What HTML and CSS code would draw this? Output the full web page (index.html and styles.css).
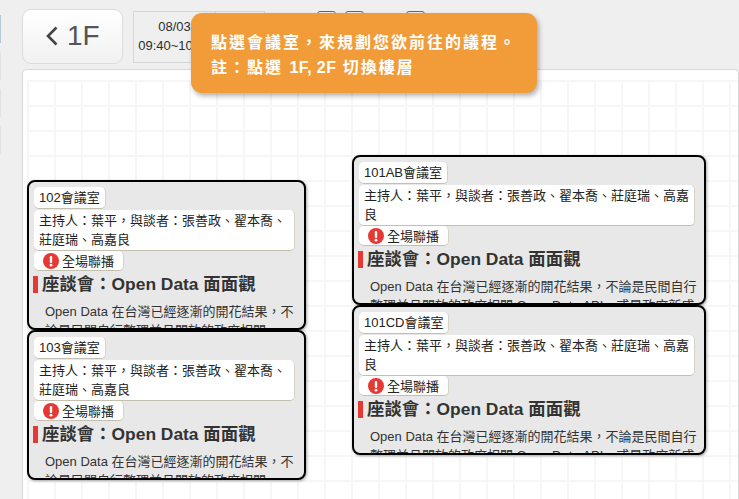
FILE: index.html
```
<!DOCTYPE html>
<html lang="zh-Hant">
<head>
<meta charset="utf-8">
<title>議程地圖</title>
<link rel="stylesheet" href="styles.css">
</head>
<body>
<div class="rail">
  <span class="rail-item rail-active"></span>
  <span class="rail-item"></span>
  <span class="rail-item"></span>
  <span class="rail-item"></span>
</div>
<main class="page">
  <header class="toolbar">
    <button class="floor-btn">
      <svg class="chevron" width="12" height="20" viewBox="0 0 12 20"><path d="M10.5 1.5 2 10l8.500 8.500" fill="none" stroke="#444" stroke-width="2.600"/></svg>
      <span>1F</span>
    </button>
    <div class="session">
      <div class="session-time">08/03<br>09:40~10:30</div>
      <div class="session-extra"></div>
    </div>
    <div class="tools">
      <span class="tool"></span>
      <span class="tool"></span>
      <span class="tool tool-far"></span>
    </div>
  </header>
  <section class="map">
    <div class="grid"></div>

    <article class="room room-narrow room-102">
      <div class="tag">102會議室</div>
      <div class="host">主持人&#xFF1A;葉平&#xFF0C;與談者&#xFF1A;張善政、翟本喬、莊庭瑞、高嘉良</div>
      <div class="live"><svg width="16" height="16" viewBox="0 0 16 16"><circle cx="8" cy="8" r="8" fill="#e53935"/><rect x="6.800" y="3" width="2.400" height="7" rx="1" fill="#fff"/><circle cx="8" cy="12.200" r="1.400" fill="#fff"/></svg>全場聯播</div>
      <h2 class="title">座談會&#xFF1A;Open Data 面面觀</h2>
      <p class="desc">Open Data 在台灣已經逐漸的開花結果&#xFF0C;不論是民間自行整理並且開放的政府相關 Open Data API&#xFF0C;或是政府新成立的資料開放平台</p>
    </article>

    <article class="room room-narrow room-103">
      <div class="tag">103會議室</div>
      <div class="host">主持人&#xFF1A;葉平&#xFF0C;與談者&#xFF1A;張善政、翟本喬、莊庭瑞、高嘉良</div>
      <div class="live"><svg width="16" height="16" viewBox="0 0 16 16"><circle cx="8" cy="8" r="8" fill="#e53935"/><rect x="6.800" y="3" width="2.400" height="7" rx="1" fill="#fff"/><circle cx="8" cy="12.200" r="1.400" fill="#fff"/></svg>全場聯播</div>
      <h2 class="title">座談會&#xFF1A;Open Data 面面觀</h2>
      <p class="desc">Open Data 在台灣已經逐漸的開花結果&#xFF0C;不論是民間自行整理並且開放的政府相關 Open Data API&#xFF0C;或是政府新成立的資料開放平台</p>
    </article>

    <article class="room room-wide room-101ab">
      <div class="tag">101AB會議室</div>
      <div class="host">主持人&#xFF1A;葉平&#xFF0C;與談者&#xFF1A;張善政、翟本喬、莊庭瑞、高嘉良</div>
      <div class="live"><svg width="16" height="16" viewBox="0 0 16 16"><circle cx="8" cy="8" r="8" fill="#e53935"/><rect x="6.800" y="3" width="2.400" height="7" rx="1" fill="#fff"/><circle cx="8" cy="12.200" r="1.400" fill="#fff"/></svg>全場聯播</div>
      <h2 class="title">座談會&#xFF1A;Open Data 面面觀</h2>
      <p class="desc">Open Data 在台灣已經逐漸的開花結果&#xFF0C;不論是民間自行整理並且開放的政府相關 Open Data API&#xFF0C;或是政府新成立的資料開放平台</p>
    </article>

    <article class="room room-wide room-101cd">
      <div class="tag">101CD會議室</div>
      <div class="host">主持人&#xFF1A;葉平&#xFF0C;與談者&#xFF1A;張善政、翟本喬、莊庭瑞、高嘉良</div>
      <div class="live"><svg width="16" height="16" viewBox="0 0 16 16"><circle cx="8" cy="8" r="8" fill="#e53935"/><rect x="6.800" y="3" width="2.400" height="7" rx="1" fill="#fff"/><circle cx="8" cy="12.200" r="1.400" fill="#fff"/></svg>全場聯播</div>
      <h2 class="title">座談會&#xFF1A;Open Data 面面觀</h2>
      <p class="desc">Open Data 在台灣已經逐漸的開花結果&#xFF0C;不論是民間自行整理並且開放的政府相關 Open Data API&#xFF0C;或是政府新成立的資料開放平台</p>
    </article>
  </section>
</main>
<aside class="hint">點選會議室&#xFF0C;來規劃您欲前往的議程。<br>註&#xFF1A;點選 <span class="hint-latin">1F, 2F</span> 切換樓層</aside>
</body>
</html>
```
FILE: styles.css
```
* { box-sizing: border-box; }
html, body { height: 100%; }
body {
  margin: 0;
  overflow: hidden;
  background: #efefef;
  color: #333;
  font-family: "Liberation Sans", "Noto Sans CJK TC", sans-serif;
  font-size: 13px;
}
.rail {
  position: absolute;
  left: 0;
  top: 15px;
  display: flex;
  flex-direction: column;
  gap: 9px;
}
.rail-item { width: 1px; height: 28px; background: #e2e2e2; }
.rail-active { background: #b4c8d4; }
.page { height: 100%; overflow: hidden; padding: 9px 0 0 22px; }
.toolbar { display: flex; align-items: flex-start; height: 55px; margin-bottom: 5px; }
.floor-btn {
  display: flex;
  align-items: center;
  justify-content: flex-start;
  gap: 9px;
  width: 101px;
  height: 55px;
  padding: 0 0 2px 23px;
  border: 1px solid #dcdcdc;
  border-radius: 9px;
  background: linear-gradient(#fff, #f1f1f1);
  color: #555;
  font: 28px/1 "Liberation Sans", sans-serif;
}
.session {
  display: flex;
  width: 132px;
  height: 52px;
  margin: 2px 0 0 10px;
  border: 1px solid #d6d6d6;
  background: #efefef;
}
.session-time {
  width: 82px;
  padding-top: 5px;
  border-right: 1px solid #d6d6d6;
  line-height: 19px;
  text-align: center;
  color: #2d2d2d;
}
.tools { display: flex; gap: 9px; margin: 2px 0 0 52px; }
.tool {
  width: 19px;
  height: 19px;
  border: 1px solid #666;
  border-radius: 3px;
}
.tool-far { margin-left: 33px; }
.map {
  position: relative;
  height: 430px;
  padding: 10px 0 0 4px;
  background: #fff;
  border: 1px solid #d8d8d8;
  border-bottom: 0;
  border-radius: 5px 5px 0 0;
}
.grid {
  height: 100%;
  background-image:
    linear-gradient(to right, #f6f6f6 2px, transparent 2px),
    linear-gradient(to bottom, #f6f6f6 2px, transparent 2px);
  background-size: 27px 25px;
}
.room {
  position: absolute;
  height: 150px;
  overflow: hidden;
  padding: 5px;
  background: #e8e8e8;
  border: 2px solid #000;
  border-radius: 8px;
  box-shadow: 1px 1px 3px rgba(0, 0, 0, .35);
}
.room-narrow { width: 279px; }
.room-wide { width: 354px; }
.room-102 { left: 4px; top: 110px; }
.room-103 { left: 4px; top: 260px; }
.room-101ab { left: 329px; top: 85px; }
.room-101cd { left: 329px; top: 235px; }
.tag {
  width: fit-content;
  height: 22px;
  padding: 0 5px;
  line-height: 21px;
  color: #222;
  background: #fff;
  border-radius: 5px;
  border-bottom: 1px solid #c4c0b0;
  border-right: 1px solid #d6d3c6;
}
.host {
  margin: 1px 4px 0 0;
  height: 41px;
  padding: 1px 5px 0;
  line-height: 19px;
  color: #222;
  background: #fff;
  border-radius: 5px;
  border-bottom: 1px solid #c4c0b0;
  border-right: 1px solid #d6d3c6;
}
.live {
  display: flex;
  align-items: center;
  gap: 3px;
  width: 90px;
  height: 20px;
  padding-left: 9px;
  color: #222;
  background: #fff;
  border-radius: 5px;
  border-bottom: 1px solid #c4c0b0;
  border-right: 1px solid #d6d3c6;
}
.title {
  margin: 5px 0 0 -1px;
  padding-left: 4px;
  height: 17px;
  border-left: 5px solid #e53935;
  font-size: 17.4px;
  line-height: 17px;
  font-weight: 700;
  color: #333;
  white-space: nowrap;
}
.desc {
  margin: 9px 0 0;
  padding: 0 2px 0 11px;
  line-height: 19px;
  color: #333;
}
.hint {
  position: absolute;
  left: 191px;
  top: 13px;
  width: 346px;
  height: 80px;
  padding: 17px 20px 0;
  background: #f19c39;
  border-radius: 11px;
  box-shadow: 2px 3px 5px rgba(0, 0, 0, .3);
  color: #fff;
  font-size: 16px;
  font-weight: 700;
  letter-spacing: 2px;
  line-height: 25px;
}
.hint-latin { letter-spacing: .4px; }
```
